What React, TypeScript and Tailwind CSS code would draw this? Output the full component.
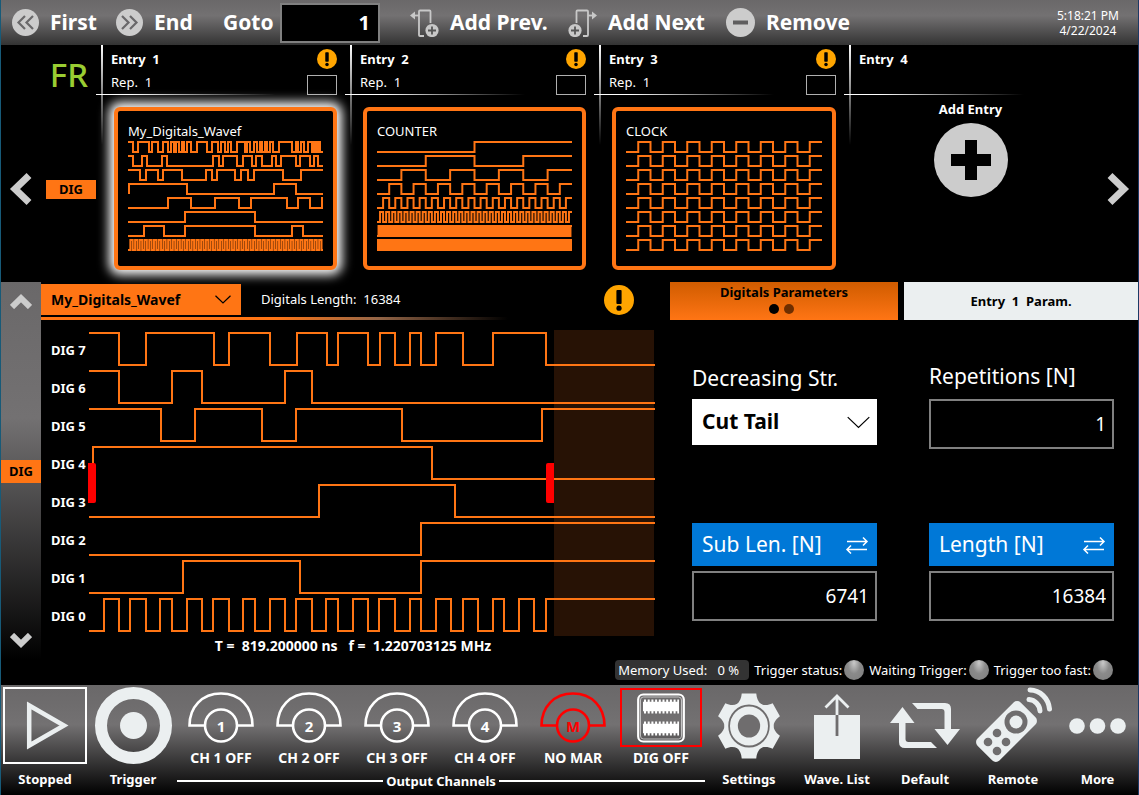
import { useState } from "react";
import type { ReactNode } from "react";
import clsx from "clsx";

type Trace = { high?: boolean; from?: number; edges: number[] };

type Entry = {
  id: number;
  name: string;
  traces: Trace[];
};

const ORANGE = "#ff7514";
const LIGHT = "#ebeff0";
const CUT = "#6f6d6e";

// edge positions of a regular clock, starting low
function clock(half: number, width: number) {
  const edges: number[] = [];
  for (let x = half; x < width - 0.5; x += half) edges.push(x);
  return edges;
}

const THUMB_WIDTH = 195;

const digitalsThumb: Trace[] = [
  {
    high: true,
    edges: [
      5, 10, 21, 24, 30, 35, 40, 43, 46, 48, 51, 54, 56, 59, 63, 69, 79, 84, 90, 93, 97, 100, 103, 109, 117, 119, 122,
      126, 129, 132, 134, 137, 139, 142, 145, 151, 164, 168, 170, 173, 176, 180, 184, 186, 188, 190, 192,
    ],
  },
  { high: true, edges: [5, 14, 19, 34, 39, 85, 91, 95, 109, 115, 124, 128, 134, 144, 148, 153, 168, 172, 182, 186, 190] },
  { high: true, edges: [12, 18, 30, 35, 54, 78, 84, 89, 107, 113, 120, 126, 155, 173] },
  { from: 1, edges: [1, 59, 146, 168] },
  { edges: [40, 63, 87, 111, 123, 159, 170, 182, 194] },
  { edges: [57, 127] },
  { edges: [16, 36, 57, 127, 164, 175] },
  { edges: clock(2.36, THUMB_WIDTH) },
];

const counterThumb: Trace[] = Array.from({ length: 8 }, (_, i) => ({
  edges: clock(THUMB_WIDTH / 2 ** (i + 1), THUMB_WIDTH),
}));

const clockThumb: Trace[] = Array.from({ length: 8 }, () => ({ edges: clock(THUMB_WIDTH / 16, THUMB_WIDTH) }));

const entries: Entry[] = [
  { id: 1, name: "My_Digitals_Wavef", traces: digitalsThumb },
  { id: 2, name: "COUNTER", traces: counterThumb },
  { id: 3, name: "CLOCK", traces: clockThumb },
];

// DIG 7 first, DIG 0 last
const digitals: Trace[] = [
  { high: true, edges: [31, 58, 126, 141, 182, 209, 239, 250, 280, 292, 307, 322, 333, 348, 375, 405, 458] },
  { high: true, edges: [31, 84, 114, 197, 224] },
  { high: true, edges: [73, 107, 174, 208, 314, 454] },
  { from: 5, edges: [5, 344] },
  { edges: [231, 367] },
  { edges: [333] },
  { edges: [95, 212, 333] },
  {
    edges: [
      16, 31, 42, 58, 72, 84, 99, 114, 125, 141, 155, 167, 182, 197, 208, 224, 238, 250, 265, 280, 291, 307, 322, 333,
      348, 363, 375, 390, 405, 416, 431, 446, 458,
    ],
  },
];

function tracePath(trace: Trace, width: number, top: number, amplitude: number, start: number) {
  let high = !!trace.high;
  const level = () => (high ? top : top + amplitude);
  let d = `M${trace.from ?? start} ${level()}`;
  for (const x of trace.edges) {
    d += `H${x}`;
    high = !high;
    d += `V${level()}`;
  }
  return `${d}H${width}`;
}

function Chevron({ className }: { className?: string }) {
  return (
    <svg viewBox="0 0 24 34" className={className} fill="none" stroke="#cccccc" strokeWidth="7">
      <path d="M20 3.500L6 17l14 13.500" />
    </svg>
  );
}

function ScrollChevron({ className }: { className?: string }) {
  return (
    <svg viewBox="0 0 22 15" className={clsx("h-[15px] w-[22px]", className)} fill="none" stroke="#cccccc" strokeWidth="6">
      <path d="M2 13L11 4.200L20 13" />
    </svg>
  );
}

function ThinArrow({ className }: { className?: string }) {
  return (
    <svg viewBox="0 0 16 9" className={className} fill="none" stroke="currentColor" strokeWidth="1.2">
      <path d="M.5 .8L8 8L15.5 .8" vectorEffect="non-scaling-stroke" />
    </svg>
  );
}

function Warning({ className }: { className?: string }) {
  return (
    <svg viewBox="0 0 30 30" className={className}>
      <circle cx="15" cy="15" r="15" fill="#ffa500" />
      <rect x="12.4" y="5" width="5.2" height="14" rx="1" />
      <circle cx="15" cy="23.2" r="2.6" />
    </svg>
  );
}

function AddIcon({ className }: { className?: string }) {
  return (
    <svg viewBox="0 0 29 29" className={clsx("h-[29px] w-[29px]", className)} fill="none" stroke="#c8c8c8" strokeWidth="1.8">
      <path d="M20.5 15V3.5q0-1-1-1h-9.500q-1 0-1 1V27q0 1 1 1H14" />
      <path d="M9 7.500H4" />
      <path d="M0 7.500L5 3.500v8z" fill="#c8c8c8" stroke="none" />
      <circle cx="22" cy="22.500" r="6.600" fill="#c8c8c8" stroke="none" />
      <path d="M22 18.500v8M18 22.500h8" stroke="#555" />
    </svg>
  );
}

function DoubleChevron({ flip }: { flip?: boolean }) {
  return (
    <svg viewBox="0 0 27 27" className={clsx("size-[27px]", flip && "-scale-x-100")} fill="none" stroke="#69686a" strokeWidth="2.200">
      <circle cx="13.500" cy="13.500" r="13.500" fill="#cccccc" stroke="none" />
      <path d="M13 7L6.500 13.500L13 20M21 7L14.500 13.500L21 20" />
    </svg>
  );
}

function ToolButton({ icon, label, className }: { icon: ReactNode; label: string; className?: string }) {
  return (
    <button className={clsx("flex items-center whitespace-nowrap", className)}>
      {icon}
      <span>{label}</span>
    </button>
  );
}

function Toolbar() {
  return (
    <header className="flex h-[45px] items-center bg-[linear-gradient(#6a6869,#737172_35%,#333333)] pl-[11px] text-[21px] font-bold">
      <ToolButton icon={<DoubleChevron />} label="First" className="w-[104px] gap-[11px]" />
      <ToolButton icon={<DoubleChevron flip />} label="End" className="w-[107px] gap-[11px]" />
      <label htmlFor="goto" className="w-[57px]">
        Goto
      </label>
      <input
        id="goto"
        defaultValue="1"
        className="h-10 w-[100px] border-2 border-[#808080] bg-black pr-2 text-right text-[20px] outline-none"
      />
      <ToolButton icon={<AddIcon />} label="Add Prev." className="ml-[30px] w-[158px] gap-[11px]" />
      <ToolButton icon={<AddIcon className="-scale-x-100" />} label="Add Next" className="w-[158px] gap-[11px]" />
      <ToolButton
        icon={
          <svg viewBox="0 0 29 29" className="size-[29px]">
            <circle cx="14.500" cy="14.500" r="14.500" fill="#cccccc" />
            <path d="M7 12.500h15v4H7z" fill="#5f5e5f" />
          </svg>
        }
        label="Remove"
        className="gap-[11px]"
      />
      <div className="mr-[19px] ml-auto text-center text-[12px] leading-[15px] font-normal">
        <div>5:18:21 PM</div>
        <div>4/22/2024</div>
      </div>
    </header>
  );
}

function EntryHeader({ id, children }: { id: number; children?: ReactNode }) {
  return (
    <div className="relative h-[50px] pt-[5px] pl-[10px]">
      <div className="absolute top-0 left-0 h-[100px] w-[2px] bg-linear-to-b from-white to-transparent" />
      <div className="absolute bottom-0 -left-[5px] h-px w-[180px] bg-linear-to-r from-white from-20% to-transparent" />
      <h2 className="text-[13px] leading-[18px] font-bold whitespace-pre">{`Entry  ${id}`}</h2>
      {children}
    </div>
  );
}

function EntryCard({ entry, selected, onSelect }: { entry: Entry; selected: boolean; onSelect: () => void }) {
  return (
    <div>
      <EntryHeader id={entry.id}>
        <p className="mt-[5px] text-[13px] leading-[18px] whitespace-pre">{"Rep.  1"}</p>
        <Warning className="absolute top-[4px] right-[13px] size-5" />
        <div className="absolute right-[13px] bottom-0 h-5 w-[30px] border border-[#b0b0b0] bg-black" />
      </EntryHeader>
      <button
        onClick={onSelect}
        className={clsx(
          "relative mt-3 ml-[13px] block w-[calc(100%-26px)] rounded-md border-4 border-[#ff7514] bg-black px-[10px] pt-[11px] pb-[14px] text-left",
          selected && "shadow-[0_0_11px_5px_#ffffff]",
        )}
      >
        <span className="block text-[13px] leading-[18px]">{entry.name}</span>
        <svg viewBox={`0 0 ${THUMB_WIDTH} 112`} preserveAspectRatio="none" className="h-[112px] w-full">
          {entry.traces.map((trace, i) => (
            <path
              key={i}
              d={tracePath(trace, THUMB_WIDTH, 14 * i + 2, 10, 0)}
              fill="none"
              stroke={ORANGE}
              strokeWidth="2"
              vectorEffect="non-scaling-stroke"
            />
          ))}
        </svg>
      </button>
    </div>
  );
}

function Sequencer() {
  const [selected, setSelected] = useState(1);

  return (
    <section className="grid h-[237px] grid-cols-[100px_249fr_249fr_250fr_289fr]">
      <div className="relative">
        <div className="pt-[7px] pr-[13px] text-right text-[33px] leading-[45px] font-medium text-[#9acd32]">FR</div>
        <div className="mt-[75px] flex items-center gap-[13px] pl-2">
          <button aria-label="Previous entries">
            <Chevron className="h-[34px] w-6" />
          </button>
          <div className="h-[19px] w-[50px] bg-[#ff7514] text-center text-[13px] leading-[19px] font-bold text-black">DIG</div>
        </div>
      </div>
      {entries.map((entry) => (
        <EntryCard key={entry.id} entry={entry} selected={entry.id === selected} onSelect={() => setSelected(entry.id)} />
      ))}
      <div>
        <EntryHeader id={4} />
        <div className="flex pt-[5px]">
          <button className="mx-auto flex flex-col items-center pr-[14px] text-[13px] leading-[18px] font-bold">
            Add Entry
            <svg viewBox="0 0 74 74" className="mt-[5px] size-[74px]">
              <circle cx="37" cy="37" r="37" fill="#cccccc" />
              <path d="M31 17h12v14h14v12H43v14H31V43H17V31h14z" />
            </svg>
          </button>
          <button aria-label="Next entries" className="mr-2 pt-[72px]">
            <Chevron className="h-[34px] w-6 rotate-180" />
          </button>
        </div>
      </div>
    </section>
  );
}

function SideNav() {
  return (
    <nav className="flex flex-col items-center justify-between bg-[linear-gradient(#6a6869,#737172_36%,#000)] pt-3 pb-3">
      <button aria-label="Scroll up">
        <ScrollChevron />
      </button>
      <div className="h-[23px] w-full bg-[#ff7514] text-center text-[13px] leading-[23px] font-bold text-black">DIG</div>
      <button aria-label="Scroll down">
        <ScrollChevron className="rotate-180" />
      </button>
    </nav>
  );
}

function WavePanel() {
  return (
    <div className="pt-[2px]">
      <div className="relative flex h-[31px] items-center">
        <div className="relative h-full w-[200px]">
          <select
            aria-label="Waveform"
            className="h-full w-full appearance-none bg-[#ff7514] pl-[10px] text-[14px] font-bold text-black outline-none"
          >
            <option>My_Digitals_Wavef</option>
          </select>
          <ThinArrow className="pointer-events-none absolute top-[11px] right-[10px] h-[9px] w-4 text-black" />
        </div>
        <p className="ml-5 text-[13px] whitespace-pre">{"Digitals Length:  16384"}</p>
        <Warning className="mr-[21px] ml-auto size-[30px]" />
      </div>
      <div className="mt-[2px] h-[3px] w-[76%] bg-[linear-gradient(to_right,#ff7514_50%,#956647_72%,transparent)]" />
      <div className="mt-[10px] flex">
        <ul className="w-[47px] pl-[10px] text-[13px] font-bold whitespace-nowrap">
          {digitals.map((_, i) => (
            <li key={i} className="flex h-[38px] items-center pt-[3px]">{`DIG ${7 - i}`}</li>
          ))}
        </ul>
        <svg viewBox="0 0 567 306" preserveAspectRatio="none" className="h-[306px] min-w-0 flex-1">
          <rect x="466" y="0" width="100" height="306" fill="#271205" />
          {digitals.map((trace, i) => (
            <path
              key={i}
              d={tracePath(trace, 567, 38 * i + 3, 32, 1)}
              fill="none"
              stroke={ORANGE}
              strokeWidth="2"
              vectorEffect="non-scaling-stroke"
            />
          ))}
          <path d="M0 133h6q2 0 2 2v36q0 2-2 2H0z" fill="#ff0000" />
          <path d="M466 133h-6q-2 0-2 2v36q0 2 2 2h6z" fill="#ff0000" />
        </svg>
      </div>
      <p className="pl-[10px] text-center text-[14px] leading-5 font-bold whitespace-pre">
        {"T =  819.200000 ns   f =  1.220703125 MHz"}
      </p>
    </div>
  );
}

const fieldClass = "h-[50px] w-full border-2 border-[#808080] bg-black pr-[6px] text-right text-[19px] outline-none";

function LengthField({ id, label, value }: { id: string; label: string; value: string }) {
  return (
    <div>
      <button className="flex h-[43px] w-full items-center justify-between bg-[#0078d7] pr-2 pl-[10px] text-[21px] whitespace-nowrap">
        {label}
        <svg viewBox="0 0 24 18" className="h-[18px] w-6" fill="none" stroke="white" strokeWidth="1.5">
          <path d="M2 5.500h20M18 1.500l4 4l-4 4M22 13.500H2M6 9.500l-4 4l4 4" />
        </svg>
      </button>
      <input id={id} aria-label={label} defaultValue={value} className={clsx(fieldClass, "mt-[5px]")} />
    </div>
  );
}

function ParamsPanel() {
  const [tab, setTab] = useState(0);

  return (
    <div className="pl-[15px]">
      <div role="tablist" className="grid h-[38px] grid-cols-[228fr_234fr] gap-[6px] text-[13px] leading-[18px] font-bold text-black">
        <button
          role="tab"
          aria-selected={tab === 0}
          onClick={() => setTab(0)}
          className="flex flex-col items-center bg-linear-to-b from-[#d05c00] to-[#ff7514] pt-px"
        >
          Digitals Parameters
          <span className="mt-[3px] mr-[5px] flex gap-[5px]">
            <i className="size-[10px] rounded-full bg-black" />
            <i className="size-[10px] rounded-full bg-[#6e2e00]" />
          </span>
        </button>
        <button role="tab" aria-selected={tab === 1} onClick={() => setTab(1)} className="bg-[#ebeff0] whitespace-pre">
          {"Entry  1  Param."}
        </button>
      </div>
      <div className="grid grid-cols-2 gap-x-[52px] pt-[40px] pr-6 pl-[22px]">
        <div>
          <label htmlFor="decreasing" className="block h-[39px] text-[21px] leading-[36px] whitespace-nowrap">
            Decreasing Str.
          </label>
          <div className="relative">
            <select
              id="decreasing"
              className="h-[46px] w-full appearance-none bg-white pl-[10px] text-[21px] font-bold text-black outline-none"
            >
              <option>Cut Tail</option>
            </select>
            <ThinArrow className="pointer-events-none absolute top-[17px] right-[7px] h-[13px] w-[23px] text-black" />
          </div>
        </div>
        <div>
          <label htmlFor="repetitions" className="block h-[39px] text-[21px] leading-[32px] whitespace-nowrap">
            Repetitions [N]
          </label>
          <input id="repetitions" defaultValue="1" className={fieldClass} />
        </div>
        <div className="col-span-2 h-[74px]" />
        <LengthField id="sub-length" label="Sub Len. [N]" value="6741" />
        <LengthField id="length" label="Length [N]" value="16384" />
      </div>
    </div>
  );
}

function StatusBar() {
  return (
    <div className="flex h-[25px] items-start justify-end gap-[5px] pr-[25px] text-[13px] leading-5 whitespace-nowrap">
      <div className="w-[134px] rounded-[4px] bg-[#333333] pl-[3px] whitespace-pre">{"Memory Used:   0 %"}</div>
      {["Trigger status:", "Waiting Trigger:", "Trigger too fast:"].map((label) => (
        <div key={label} className="flex items-center gap-[2px]">
          {label}
          <span className="size-5 rounded-full bg-[radial-gradient(ellipse_at_50%_15%,#c9c9c9,#8a8a8a_45%,#7d7d7d)]" />
        </div>
      ))}
    </div>
  );
}

function ChannelIcon({ label, off }: { label: string; off?: boolean }) {
  return (
    <span className={clsx("relative block h-[54px] w-[66px]", off ? "text-[#ff0000]" : "text-white")}>
      <svg viewBox="0 0 66 54" className="h-full w-full" fill="none" stroke="currentColor" strokeWidth="2.600">
        <path d="M17 34.500H1.500C1.500 16 14 2.500 33 2.500S64.500 16 64.500 34.500H49" />
        <circle cx="33" cy="34.500" r="16" />
      </svg>
      <span className="absolute inset-x-0 top-[25px] text-center text-[15px] leading-5 font-bold">{label}</span>
    </span>
  );
}

function DigIcon() {
  return (
    <span className="flex h-[59px] w-[82px] items-center justify-center border-2 border-[#ff0000]">
      <svg viewBox="0 0 48 50" className="h-[50px] w-12" fill="none" stroke="white">
        <rect x="1.200" y="1.500" width="45.600" height="47" rx="5" strokeWidth="2.200" />
        <rect x="3.500" y="4" width="41" height="42" rx="3" strokeWidth=".6" />
        <path d="M6 13.500h36M6 35.500h36" strokeWidth="9.500" />
        <path d="M7 13.500h35M7 35.500h35" strokeWidth="14" strokeDasharray="2 1.700" />
      </svg>
    </span>
  );
}

function OutputChannels() {
  const channels = ["1", "2", "3", "4"];

  return (
    <div className="col-span-6">
      <div className="grid grid-cols-6 text-[14px] leading-[18px] font-bold">
        {channels.map((ch) => (
          <button key={ch} className="flex h-[82px] flex-col items-center justify-between pt-[6px]">
            <ChannelIcon label={ch} />
            {`CH ${ch} OFF`}
          </button>
        ))}
        <button className="flex h-[82px] flex-col items-center justify-between pt-[6px]">
          <ChannelIcon label="M" off />
          NO MAR
        </button>
        <button className="flex h-[82px] flex-col items-center justify-between pt-[3px]">
          <DigIcon />
          DIG OFF
        </button>
      </div>
      <div className="mt-[5px] flex items-center gap-[3px] text-[13px] leading-[18px] font-bold">
        <span className="h-[2px] flex-1 bg-white" />
        Output Channels
        <span className="h-[2px] flex-1 bg-white" />
      </div>
    </div>
  );
}

function DockButton({ label, children }: { label: string; children: ReactNode }) {
  return (
    <button className="flex h-[103px] flex-col items-center justify-between pt-[2px] text-[13px] leading-[18px] font-bold whitespace-nowrap">
      <span className="flex h-[77px] items-center justify-center">{children}</span>
      {label}
    </button>
  );
}

function GearIcon() {
  return (
    <svg viewBox="-33 -33 66 66" preserveAspectRatio="none" className="h-[66px] w-[64px]" fill={LIGHT}>
      <circle r="25.500" />
      {[0, 60, 120, 180, 240, 300].map((angle) => (
        <path key={angle} transform={`rotate(${angle})`} d="M-13 -21C-9 -25 -8 -28 -7.500 -32.500H7.500C8 -28 9 -25 13 -21z" />
      ))}
      <circle r="20.500" fill="none" stroke={CUT} strokeWidth="1.800" />
      <circle r="11.500" fill={CUT} />
    </svg>
  );
}

function RemoteIcon() {
  return (
    <svg viewBox="0 0 78 77" className="h-[77px] w-[78px]">
      <rect x="17" y="14" width="31" height="61" rx="5" transform="rotate(45 32.500 44.500)" fill={LIGHT} />
      <g fill={CUT}>
        <circle cx="42" cy="35" r="11.500" />
        <circle cx="23" cy="46" r="4.300" />
        <circle cx="14" cy="55" r="4.300" />
        <circle cx="32" cy="55" r="4.300" />
        <circle cx="23" cy="64" r="4.300" />
      </g>
      <circle cx="42" cy="35" r="6.500" fill={LIGHT} />
      <path d="M55 12.500A12 12 0 0 1 66 24M56 3A20 21 0 0 1 75.500 22" fill="none" stroke={LIGHT} strokeWidth="5" strokeLinecap="round" />
    </svg>
  );
}

function Dock() {
  return (
    <footer className="grid h-[110px] grid-cols-[repeat(12,88fr)_81fr] bg-[linear-gradient(#6a6869,#737172_36%,#000)]">
      <DockButton label="Stopped">
        <svg viewBox="0 0 84 77" className="h-[77px] w-[84px]" fill="none">
          <rect x="1" y="1" width="82" height="75" stroke="white" strokeWidth="2" />
          <path d="M26.200 18.500V58.500L61 38.500z" stroke={LIGHT} strokeWidth="4.500" />
        </svg>
      </DockButton>
      <DockButton label="Trigger">
        <svg viewBox="0 0 77 77" className="size-[77px]" fill="none">
          <circle cx="38.500" cy="38.500" r="32.500" stroke={LIGHT} strokeWidth="12" />
          <circle cx="38.500" cy="38.500" r="13.500" fill={LIGHT} />
        </svg>
      </DockButton>
      <OutputChannels />
      <DockButton label="Settings">
        <GearIcon />
      </DockButton>
      <DockButton label="Wave. List">
        <svg viewBox="0 0 48 66" className="h-[66px] w-12" fill="none">
          <path d="M1 22h46v44H1z" fill={LIGHT} />
          <path d="M24 22V3M12.500 14.500L24 3l11.500 11.500" stroke={LIGHT} strokeWidth="2.800" />
          <path d="M24 22v21" stroke={CUT} strokeWidth="2.800" />
        </svg>
      </DockButton>
      <DockButton label="Default">
        <svg viewBox="0 0 70 46" className="h-[46px] w-[70px]" fill={LIGHT}>
          <path d="M12.500 4L24.500 20H15.500V36q0 3 3 3H41l6 6H15q-6 0-6-6V20H0z" />
          <path d="M22 0H55q6 0 6 6V26H70L57.500 42L44.500 26H54.500V9q0-3-3-3H27.500z" />
        </svg>
      </DockButton>
      <DockButton label="Remote">
        <RemoteIcon />
      </DockButton>
      <DockButton label="More">
        <svg viewBox="0 0 57 16" className="h-4 w-[57px]" fill={LIGHT}>
          <circle cx="8" cy="8" r="7.800" />
          <circle cx="28.500" cy="8" r="7.800" />
          <circle cx="49" cy="8" r="7.800" />
        </svg>
      </DockButton>
    </footer>
  );
}

export default function App() {
  return (
    <div className="min-h-screen border-r border-l border-r-[#1c3a66] border-l-[#175a78] bg-black font-['Noto_Sans','Open_Sans',sans-serif] text-white">
      <Toolbar />
      <Sequencer />
      <main className="grid h-[378px] grid-cols-[40px_614fr_483fr]">
        <SideNav />
        <WavePanel />
        <ParamsPanel />
      </main>
      <StatusBar />
      <Dock />
    </div>
  );
}
